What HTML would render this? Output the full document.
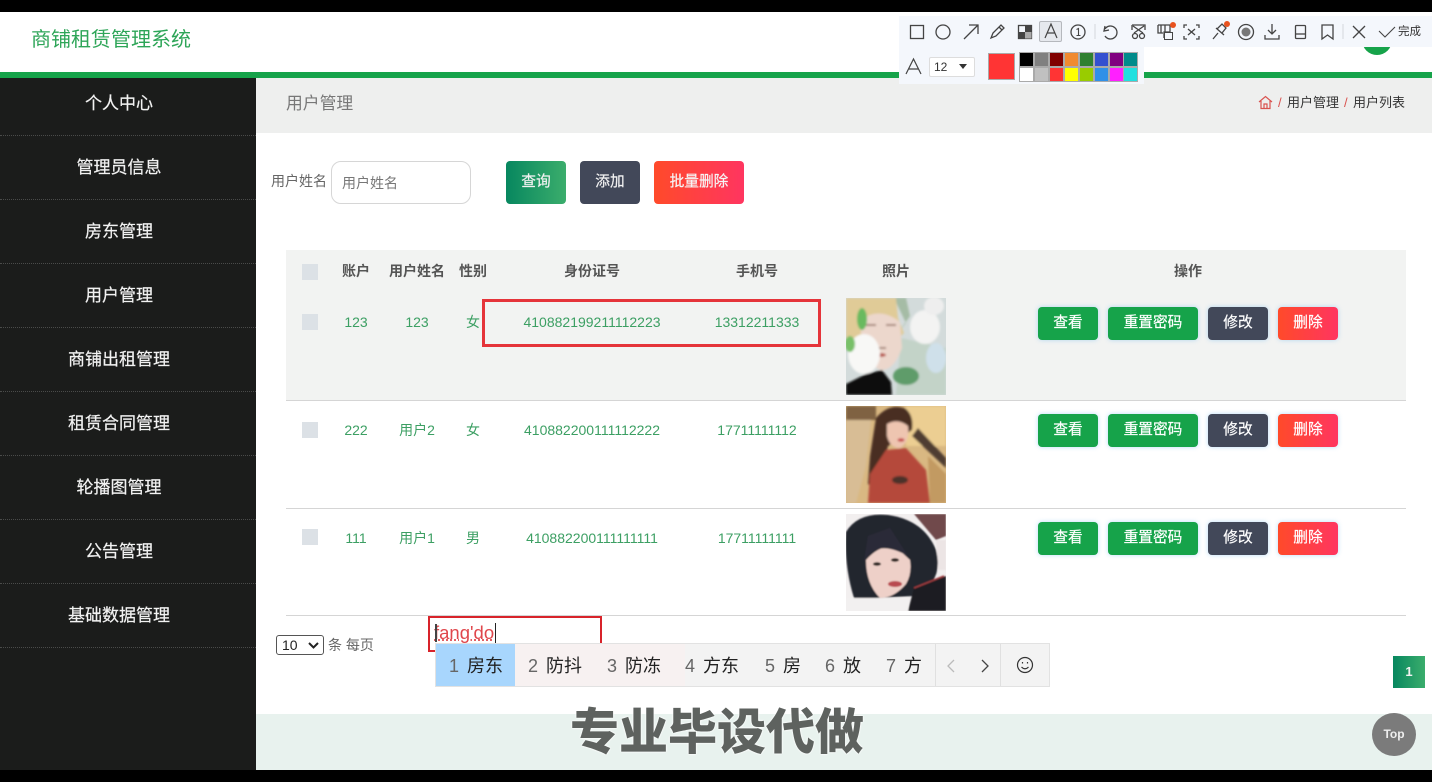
<!DOCTYPE html>
<html lang="zh"><head><meta charset="utf-8"><title>商铺租赁管理系统</title>
<style>
*{box-sizing:border-box}
html,body{margin:0;padding:0;width:1432px;height:782px;overflow:hidden;background:#fff;font-family:"Liberation Sans","Noto Sans CJK SC",sans-serif}
.a{position:absolute}
.nav{position:absolute;left:0;width:256px;height:64px;padding-right:18px;text-align:center;color:#f2f2f2;font-size:17px;line-height:64px;border-bottom:1px dotted #4a4b4a;-webkit-text-stroke:.2px #f2f2f2}
.btn{position:absolute;height:33px;border-radius:4px;color:#fff;font-size:14.7px;line-height:33px;text-align:center;box-shadow:0 0 5px rgba(100,180,240,.45);-webkit-text-stroke:.2px #fff}
.g{background:#16a34a}.d{background:#424859}.r{background:linear-gradient(90deg,#ff4a2a,#ff3560)}
.cell{position:absolute;transform:translateX(-50%);color:#3c9f63;font-size:14px;white-space:nowrap}
.th{position:absolute;transform:translateX(-50%);color:#555;font-size:14px;font-weight:bold;white-space:nowrap}
.cb{position:absolute;left:302px;width:16px;height:16px;background:#dce1e6}
.sw{position:absolute;width:13px;height:13px;outline:1px solid #aaa}
.cand{position:absolute;top:655px;font-size:18px;color:#222;white-space:nowrap;line-height:22px}
.cand i{font-style:normal;color:#666;margin-right:8px}
svg.ic{position:absolute;fill:none;stroke:#444;stroke-width:1.3}
</style></head><body>

<!-- header -->
<div class="a" style="left:0;top:12px;width:1432px;height:60px;background:#fff"></div>
<div class="a" style="left:31px;top:27px;font-size:20px;line-height:27px;color:#2ea558">商铺租赁管理系统</div>
<div class="a" style="left:0;top:72px;width:1432px;height:6px;background:#16a34a"></div>
<div class="a" style="left:1362px;top:25px;width:30px;height:30px;background:#16a34a;border-radius:50%"></div>

<!-- sidebar -->
<div class="a" style="left:0;top:78px;width:256px;height:692px;background:#1b1c1b"></div>
<div class="nav" style="top:72px">个人中心</div>
<div class="nav" style="top:136px">管理员信息</div>
<div class="nav" style="top:200px">房东管理</div>
<div class="nav" style="top:264px">用户管理</div>
<div class="nav" style="top:328px">商铺出租管理</div>
<div class="nav" style="top:392px">租赁合同管理</div>
<div class="nav" style="top:456px">轮播图管理</div>
<div class="nav" style="top:520px">公告管理</div>
<div class="nav" style="top:584px">基础数据管理</div>

<!-- breadcrumb bar -->
<div class="a" style="left:256px;top:78px;width:1176px;height:55px;background:#eeefee"></div>
<div class="a" style="left:286px;top:94px;font-size:16.8px;line-height:20px;color:#777">用户管理</div>
<svg class="a" style="left:1258px;top:95px" width="15" height="15" viewBox="0 0 15 15" fill="none" stroke="#d9534f" stroke-width="1.2"><path d="M1 7 7.500 1.500 14 7M3 6v7.500h9V6M6 13.500V9h3v4.500"/></svg>
<div class="a" style="left:1278px;top:95px;font-size:13px;line-height:16px;color:#d9534f">/</div>
<div class="a" style="left:1287px;top:95px;font-size:13px;line-height:16px;color:#333">用户管理</div>
<div class="a" style="left:1344px;top:95px;font-size:13px;line-height:16px;color:#d9534f">/</div>
<div class="a" style="left:1353px;top:95px;font-size:13px;line-height:16px;color:#333">用户列表</div>

<!-- search -->
<div class="a" style="left:271px;top:172px;font-size:14px;line-height:18px;color:#666;white-space:nowrap">用户姓名</div>
<div class="a" style="left:331px;top:161px;width:140px;height:43px;border:1px solid #d6d6d6;border-radius:10px;background:#fff;color:#777;font-size:14px;line-height:42px;padding-left:10px">用户姓名</div>
<div class="a" style="left:506px;top:161px;width:60px;height:43px;border-radius:4px;background:linear-gradient(90deg,#07875f,#3bad6c);color:#f2f2f2;font-size:14.7px;line-height:43px;text-align:center;-webkit-text-stroke:.2px #f2f2f2">查询</div>
<div class="a" style="left:580px;top:161px;width:60px;height:43px;border-radius:4px;background:#424859;color:#f2f2f2;font-size:14.7px;line-height:43px;text-align:center;-webkit-text-stroke:.2px #f2f2f2">添加</div>
<div class="a" style="left:654px;top:161px;width:90px;height:43px;border-radius:4px;background:linear-gradient(90deg,#ff4a2a,#ff3560);color:#f6f6f6;font-size:14.7px;line-height:43px;text-align:center;-webkit-text-stroke:.2px #f6f6f6">批量删除</div>

<!-- table -->
<div class="a" style="left:286px;top:250px;width:1120px;height:150px;background:#f2f3f2"></div>
<div class="a" style="left:286px;top:400px;width:1120px;height:1px;background:#d5d5d5"></div>
<div class="a" style="left:286px;top:508px;width:1120px;height:1px;background:#d5d5d5"></div>
<div class="a" style="left:286px;top:615px;width:1120px;height:1px;background:#d5d5d5"></div>

<div class="cb" style="top:264px"></div>
<div class="th" style="left:356px;top:261px">账户</div>
<div class="th" style="left:417px;top:261px">用户姓名</div>
<div class="th" style="left:473px;top:261px">性别</div>
<div class="th" style="left:592px;top:261px">身份证号</div>
<div class="th" style="left:757px;top:261px">手机号</div>
<div class="th" style="left:896px;top:261px">照片</div>
<div class="th" style="left:1188px;top:261px">操作</div>

<div class="cb" style="top:314px"></div>
<div class="cell" style="left:356px;top:314px">123</div>
<div class="cell" style="left:417px;top:314px">123</div>
<div class="cell" style="left:473px;top:312px">女</div>
<div class="cell" style="left:592px;top:314px">410882199211112223</div>
<div class="cell" style="left:757px;top:314px">13312211333</div>

<div class="cb" style="top:422px"></div>
<div class="cell" style="left:356px;top:422px">222</div>
<div class="cell" style="left:417px;top:420px">用户2</div>
<div class="cell" style="left:473px;top:420px">女</div>
<div class="cell" style="left:592px;top:422px">410882200111112222</div>
<div class="cell" style="left:757px;top:422px">17711111112</div>

<div class="cb" style="top:529px"></div>
<div class="cell" style="left:356px;top:530px">111</div>
<div class="cell" style="left:417px;top:528px">用户1</div>
<div class="cell" style="left:473px;top:528px">男</div>
<div class="cell" style="left:592px;top:530px">410882200111111111</div>
<div class="cell" style="left:757px;top:530px">17711111111</div>

<!-- red annotation -->
<div class="a" style="left:482px;top:299px;width:339px;height:48px;border:3px solid #e5343a"></div>

<!-- photos -->
<svg class="a" style="left:846px;top:298px" width="100" height="97" viewBox="0 0 100 97"><defs><filter id="b1"><feGaussianBlur stdDeviation="1.1"/></filter></defs><rect width="100" height="97" fill="#d3dbdb"/><g filter="url(#b1)"><path d="M55 40 100 50V97H50Z" fill="#c3d3c8"/><ellipse cx="79" cy="29" rx="15" ry="17" fill="#f3f3f2"/><ellipse cx="88" cy="8" rx="10" ry="9" fill="#eeeeee"/><path d="M48 0 60 25 52 35 64 18 60 0Z" fill="#a5bca5"/><ellipse cx="60" cy="78" rx="13" ry="9" fill="#5f9c6a"/><ellipse cx="90" cy="60" rx="10" ry="15" fill="#cfe0ea"/><path d="M0 0H50L52 20 58 35 48 45 10 50 0 40Z" fill="#e0cb97"/><path d="M14 22Q34 8 54 24L56 50Q48 72 36 72 20 68 16 48Z" fill="#ecd7cc"/><path d="M20 27h10M40 27h10M30 50h10" stroke="#8d6a5c" stroke-width="1.500"/><ellipse cx="34" cy="57" rx="6" ry="2" fill="#b85850"/><ellipse cx="18" cy="56" rx="16" ry="20" fill="#f8f8f6"/><ellipse cx="16" cy="21" rx="5" ry="11" fill="#69ba5e"/><ellipse cx="4" cy="46" rx="5" ry="8" fill="#78c068"/><path d="M0 86 20 76 36 72 45 84 46 97H0Z" fill="#111"/></g></svg>
<svg class="a" style="left:846px;top:406px" width="100" height="97" viewBox="0 0 100 97"><defs><filter id="b2"><feGaussianBlur stdDeviation="1"/></filter></defs><rect width="100" height="97" fill="#d9b882"/><g filter="url(#b2)"><rect x="60" y="0" width="40" height="40" fill="#ecce92"/><path d="M0 0H30V14H0Z" fill="#7f6242"/><path d="M0 14H25L20 60 10 97H0Z" fill="#d8bd95"/><path d="M72 22 100 52V62L66 30Z" fill="#4f3d30"/><path d="M82 50 100 68V97H84Z" fill="#c29a62"/><path d="M30 12Q44-4 60 3 68 10 66 24L42 40 36 62 33 84 22 78 24 50Z" fill="#4a2f24"/><path d="M41 18Q52 12 62 20 64 36 54 42 44 42 41 30Z" fill="#eec5b0"/><path d="M22 97 24 68 40 44 60 42 80 64 84 97Z" fill="#b5483b"/><ellipse cx="54" cy="74" rx="8" ry="4" fill="#4c322c"/><ellipse cx="55" cy="34" rx="3.500" ry="1.800" fill="#c64a4e"/></g></svg>
<svg class="a" style="left:846px;top:514px" width="100" height="97" viewBox="0 0 100 97"><defs><filter id="b3"><feGaussianBlur stdDeviation=".9"/></filter></defs><rect width="100" height="97" fill="#f2efef"/><g filter="url(#b3)"><path d="M68 0H100V22L90 26Z" fill="#70494c"/><path d="M90 26H100V56H92Z" fill="#ece5e5"/><path d="M0 18Q12-2 42 1 78 6 90 36 95 56 86 68L68 82 30 84 8 84Q-2 52 0 18Z" fill="#23252f"/><path d="M20 46Q34 30 50 33L64 46Q66 60 60 70 48 84 34 84 20 70 20 46Z" fill="#eed0c8"/><path d="M18 48Q30 24 62 42L44 14 22 22Z" fill="#2a2c38"/><ellipse cx="31" cy="50" rx="4" ry="1.800" fill="#29211f"/><ellipse cx="49" cy="46" rx="4" ry="1.800" fill="#29211f"/><ellipse cx="49" cy="70" rx="7" ry="3" fill="#b9494f"/><path d="M62 97 68 74 100 62V97Z" fill="#1f1b22"/><path d="M68 74 98 62" stroke="#9c3a3c" stroke-width="1.500"/><path d="M0 84H62V97H0Z" fill="#f2f0f0"/></g></svg>

<!-- action buttons -->
<div class="btn g" style="left:1038px;top:307px;width:60px">查看</div>
<div class="btn g" style="left:1108px;top:307px;width:90px">重置密码</div>
<div class="btn d" style="left:1208px;top:307px;width:60px">修改</div>
<div class="btn r" style="left:1278px;top:307px;width:60px">删除</div>
<div class="btn g" style="left:1038px;top:414px;width:60px">查看</div>
<div class="btn g" style="left:1108px;top:414px;width:90px">重置密码</div>
<div class="btn d" style="left:1208px;top:414px;width:60px">修改</div>
<div class="btn r" style="left:1278px;top:414px;width:60px">删除</div>
<div class="btn g" style="left:1038px;top:522px;width:60px">查看</div>
<div class="btn g" style="left:1108px;top:522px;width:90px">重置密码</div>
<div class="btn d" style="left:1208px;top:522px;width:60px">修改</div>
<div class="btn r" style="left:1278px;top:522px;width:60px">删除</div>

<!-- pagination -->
<div class="a" style="left:276px;top:635px;width:48px;height:20px;border:1px solid #555;border-radius:3px;font-size:14px;line-height:18px;padding-left:5px;color:#222">10</div>
<svg class="a" style="left:308px;top:642px" width="11" height="7" viewBox="0 0 11 7" fill="none" stroke="#222" stroke-width="2"><path d="M1 1 5.500 5.500 10 1"/></svg>
<div class="a" style="left:328px;top:636px;font-size:14px;line-height:18px;color:#666;white-space:nowrap">条 每页</div>
<div class="a" style="left:1393px;top:656px;width:32px;height:32px;background:linear-gradient(90deg,#07875f,#3bad6c);color:#f2f2f2;font-size:13px;font-weight:bold;line-height:32px;text-align:center">1</div>

<!-- IME -->
<div class="a" style="left:428px;top:616px;width:174px;height:36px;border:2px solid #d8232a"></div>
<div class="a" style="left:434px;top:621px;font-size:18.5px;line-height:24px;color:#e0474c;text-decoration:underline dotted #e0474c;white-space:nowrap">fang'do</div>
<div class="a" style="left:495px;top:623px;width:1px;height:20px;background:#222"></div>
<div class="a" style="left:435px;top:624px;width:2px;height:18px;background:#444"></div>
<div class="a" style="left:435px;top:643px;width:615px;height:44px;background:#f3f3f3;border:1px solid #e2e2e2"></div>
<div class="a" style="left:436px;top:644px;width:79px;height:42px;background:#a8d6fd"></div>
<div class="a" style="left:515px;top:644px;width:170px;height:42px;background:#f7f1f1"></div>
<div class="cand" style="left:449px"><i>1</i>房东</div>
<div class="cand" style="left:528px"><i>2</i>防抖</div>
<div class="cand" style="left:607px"><i>3</i>防冻</div>
<div class="cand" style="left:685px"><i>4</i>方东</div>
<div class="cand" style="left:765px"><i>5</i>房</div>
<div class="cand" style="left:825px"><i>6</i>放</div>
<div class="cand" style="left:886px"><i>7</i>方</div>
<div class="a" style="left:935px;top:644px;width:1px;height:42px;background:#e0e0e0"></div>
<div class="a" style="left:1000px;top:644px;width:1px;height:42px;background:#e0e0e0"></div>
<svg class="a" style="left:945px;top:658px" width="50" height="16" viewBox="0 0 50 16" fill="none" stroke-width="1.300"><path d="M9 2 3 8 9 14" stroke="#bbb"/><path d="M37 2 43 8 37 14" stroke="#444"/></svg>
<svg class="a" style="left:1016px;top:656px" width="18" height="18" viewBox="0 0 18 18" fill="none" stroke="#333" stroke-width="1.200"><circle cx="9" cy="9" r="7.500"/><path d="M5.500 11Q9 14.500 12.500 11M6.500 6v1.500M11.500 6v1.500"/></svg>

<!-- footer -->
<div class="a" style="left:256px;top:714px;width:1176px;height:56px;background:#e8f2ee"></div>
<div class="a" style="left:570px;top:702px;font-size:49px;line-height:54px;font-weight:900;font-family:'Noto Sans CJK SC',sans-serif;color:#5e625f;text-shadow:0 0 2px #fff,0 0 2px #fff;white-space:nowrap">专业毕设代做</div>
<div class="a" style="left:1372px;top:713px;width:44px;height:43px;border-radius:50%;background:#7b7b7b;color:#eee;font-size:12px;font-weight:bold;line-height:42px;text-align:center">Top</div>

<!-- screenshot toolbar -->
<div class="a" style="left:899px;top:16px;width:533px;height:31px;background:#f4f7fc"></div>
<div class="a" style="left:899px;top:47px;width:245px;height:37px;background:#f4f7fc"></div>
<div class="a" style="left:1039px;top:21px;width:23px;height:21px;background:#e6e9ee;border:1px solid #b5b8bd;border-radius:2px"></div>
<svg class="ic" style="left:905px;top:19px" width="527" height="26" viewBox="905 19 527 26">
<rect x="910.500" y="25.500" width="13" height="13"/>
<circle cx="943" cy="32" r="7"/>
<path d="M964 39 978 25M969 25h9v9"/>
<path d="M991 38l2-5 8-8 3 3-8 8zM999 27l3 3"/>
<rect x="1018.500" y="25.500" width="13" height="13"/><path d="M1025 25.500h6.500v6.500h-6.500zM1018.500 32h6.500v6.500h-6.500z" fill="#444" stroke="none"/><path d="M1025 32h6.500v6.500h-6.500z" fill="#aaa" stroke="none"/>
<path d="M1045 38 1051 24 1057 38M1047 33h8" stroke-width="1.200"/>
<circle cx="1078" cy="32" r="7"/><path d="M1076.500 29.500 1078.500 28.500V35.500M1076.500 35.500h4" stroke-width="1.100"/>
<path d="M1095 24v15" stroke="#d4d7dc" stroke-width="1"/>
<path d="M1105 26 1104 31 1109 30M1105 29A6.500 6.500 0 1 1 1105 36"/>
<path d="M1132 25h13v5M1132 25v5M1133 26l10 7M1144 26l-10 7"/><circle cx="1135" cy="36" r="2.500"/><circle cx="1142" cy="36" r="2.500"/>
<path d="M1158 25h12v7h-6v6M1158 25v8h5M1161 25v8M1165 25v7"/><rect x="1164.500" y="32.500" width="8" height="7" stroke-width="1"/>
<path d="M1184 28v-3h3M1196 25h3v3M1184 36v3h3M1196 39h3v-3M1188 29l7 6M1195 29l-7 6"/>
<path d="M1213 39 1218 33M1216 28 1224 35M1217 29 1222 24 1226 28 1222 33"/>
<circle cx="1246" cy="32" r="7.500"/><circle cx="1246" cy="32" r="4.500" fill="#777" stroke="none"/>
<path d="M1272 24v10M1268 30l4 4 4-4M1265 35v4h14v-4"/>
<rect x="1295.500" y="25.500" width="10" height="13" rx="1"/><path d="M1295 34h11"/>
<path d="M1322 25h11v14l-5.500-4-5.500 4z"/>
<path d="M1343 24v15" stroke="#d4d7dc" stroke-width="1"/>
<path d="M1353 26 1365 38M1365 26 1353 38"/>
<path d="M1379 31 1385 37 1395 27" stroke-width="1.100"/>
</svg>
<div class="a" style="left:1170px;top:22px;width:6px;height:6px;border-radius:50%;background:#e8521f"></div>
<div class="a" style="left:1224px;top:21px;width:6px;height:6px;border-radius:50%;background:#e8521f"></div>
<div class="a" style="left:1398px;top:24px;font-size:11.500px;line-height:16px;color:#333;white-space:nowrap">完成</div>

<svg class="ic" style="left:905px;top:57px" width="18" height="18" viewBox="0 0 18 18"><path d="M1 17 8.500 2 16 17M4 12h9" stroke-width="1.200"/></svg>
<div class="a" style="left:929px;top:57px;width:46px;height:20px;background:#fff;border:1px solid #ddd;border-radius:2px;font-size:12px;line-height:18px;padding-left:4px;color:#333">12</div>
<div class="a" style="left:959px;top:64px;width:0;height:0;border-left:4.500px solid transparent;border-right:4.500px solid transparent;border-top:5px solid #333"></div>
<div class="a" style="left:988px;top:53px;width:27px;height:27px;background:#ff3434;border:1px solid #aaa"></div>
<div class="sw" style="left:1020px;top:53px;background:#000"></div>
<div class="sw" style="left:1035px;top:53px;background:#808080"></div>
<div class="sw" style="left:1050px;top:53px;background:#800000"></div>
<div class="sw" style="left:1065px;top:53px;background:#f08a30"></div>
<div class="sw" style="left:1080px;top:53px;background:#2f8030"></div>
<div class="sw" style="left:1095px;top:53px;background:#3450d0"></div>
<div class="sw" style="left:1110px;top:53px;background:#800080"></div>
<div class="sw" style="left:1124px;top:53px;background:#008b8b"></div>
<div class="sw" style="left:1020px;top:68px;background:#fff"></div>
<div class="sw" style="left:1035px;top:68px;background:#c0c0c0"></div>
<div class="sw" style="left:1050px;top:68px;background:#ff3434"></div>
<div class="sw" style="left:1065px;top:68px;background:#ffff00"></div>
<div class="sw" style="left:1080px;top:68px;background:#99cc00"></div>
<div class="sw" style="left:1095px;top:68px;background:#3090e8"></div>
<div class="sw" style="left:1110px;top:68px;background:#ff20ff"></div>
<div class="sw" style="left:1124px;top:68px;background:#20e0e0"></div>

<!-- video letterbox -->
<div class="a" style="left:0;top:0;width:1432px;height:12px;background:#000"></div>
<div class="a" style="left:0;top:770px;width:1432px;height:12px;background:#000"></div>
</body></html>
